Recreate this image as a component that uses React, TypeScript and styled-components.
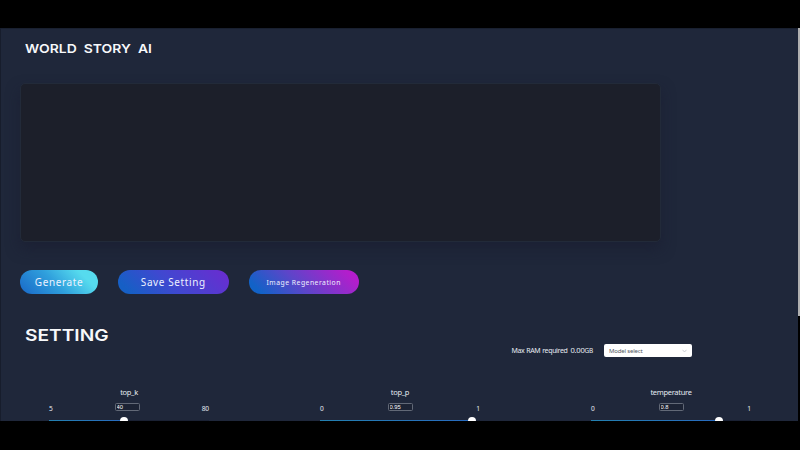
import React from 'react';
import styled, { createGlobalStyle } from 'styled-components';

const GlobalStyle = createGlobalStyle`
  * { box-sizing: border-box; }
  body { margin: 0; background: #000; overflow: hidden; }
  button, input, textarea { font-family: inherit; margin: 0; }
`;

const Screen = styled.div`
  display: flex;
  width: 800px;
  height: 450px;
  padding: 28px 0 29px;
  background: #000;
  font-family: 'Noto Sans', 'Open Sans', sans-serif;
  color: #e6ebf2;
`;

const Page = styled.main`
  width: 798px;
  height: 393px;
  flex: none;
  overflow: hidden;
  background: #1f273a;
  border-left: 1px solid #171d2c;
  border-top: 1px solid #192030;
`;

const ScrollThumb = styled.div`
  width: 2px;
  height: 288px;
  background: #b0b0b0;
`;

const Heading = styled.h1<{ $size: number; $stretch: number; $gap: number; $word?: number }>`
  margin: 0;
  width: max-content;
  font-family: Inter, sans-serif;
  font-weight: 600;
  font-size: ${p => p.$size}px;
  line-height: 20px;
  letter-spacing: ${p => p.$gap}px;
  word-spacing: ${p => p.$word ?? 0}px;
  color: #f7f8fa;
  transform: scaleX(${p => p.$stretch});
  transform-origin: left center;
`;

const Header = styled.header`
  height: 54px;
  padding: 10px 0 0 24px;
`;

const StoryBox = styled.textarea`
  display: block;
  width: 641px;
  height: 159px;
  margin-left: 19px;
  border: 1px solid #222a39;
  border-radius: 5px;
  outline: none;
  resize: none;
  background: #1c1f2a;
  color: #e6ebf2;
  box-shadow: 0 7px 14px rgba(25, 29, 48, 0.6);
`;

const Actions = styled.div`
  display: flex;
  gap: 20px;
  margin: 28px 0 0 19px;
`;

const Pill = styled.button<{ $width: number; $fill: string; $size: number; $gap: number }>`
  width: ${p => p.$width}px;
  height: 24px;
  padding: 1px 0 0;
  border: 0;
  border-radius: 12px;
  background: ${p => p.$fill};
  color: #edf2ff;
  font-size: ${p => p.$size}px;
  line-height: 23px;
  letter-spacing: ${p => p.$gap}px;
  white-space: nowrap;
`;

const SettingHeader = styled.div`
  height: 50px;
  padding: 31px 0 0 23.5px;
`;

const ModelRow = styled.div`
  display: flex;
  align-items: center;
  height: 13px;
  padding-left: 510.5px;
`;

const RamText = styled.span`
  display: flex;
  align-items: baseline;
  width: 92.5px;
  white-space: nowrap;
  font-size: 7px;
  line-height: 13px;
  letter-spacing: -0.36px;
  word-spacing: 0.4px;
`;

const RamValue = styled.span`
  margin-left: 3px;
  font-size: 7.6px;
  letter-spacing: -0.25px;
`;

const Unit = styled.small`
  font-size: 6.4px;
`;

const Select = styled.div`
  display: flex;
  align-items: center;
  justify-content: space-between;
  width: 88px;
  height: 13px;
  padding: 0 5px;
  border-radius: 2px;
  background: #fff;
  color: #50555e;
  font-size: 6px;
  letter-spacing: -0.16px;
`;

const Sliders = styled.div`
  display: flex;
  gap: 111px;
  margin: 29px 0 0 48px;
`;

const SliderGroup = styled.section`
  width: 160px;
  flex: none;
`;

const Label = styled.div`
  height: 12px;
  text-align: center;
  font-size: 7.5px;
  letter-spacing: -0.3px;
  line-height: 12px;
`;

const Range = styled.div`
  display: grid;
  grid-template-columns: 1fr 25px 1fr;
  align-items: center;
  height: 10px;
  margin-top: 5px;
  font-size: 6.6px;
  letter-spacing: -0.1px;
  line-height: 12px;
`;

const Max = styled.span`
  text-align: right;
`;

const NumberInput = styled.input<{ $shift: number }>`
  align-self: start;
  width: 25px;
  height: 8px;
  padding: 0 1px;
  margin-left: ${p => p.$shift}px;
  border: 1px solid #626977;
  border-radius: 1.5px;
  outline: none;
  background: #1c2334;
  color: #f8f9fc;
  font-family: 'Liberation Sans', sans-serif;
  font-size: 5.8px;
  line-height: 6px;
`;

const Track = styled.div`
  display: flex;
  align-items: center;
  height: 8px;
  margin-top: 4px;
  background: linear-gradient(#1a2133, #1a2133) center / 100% 2px no-repeat;
`;

const Filled = styled.div`
  height: 2px;
  background: linear-gradient(90deg, #2380b0, #286bc0);
`;

const Thumb = styled.div`
  width: 8px;
  height: 8px;
  margin-left: -4px;
  border-radius: 50%;
  background: #fff;
`;

const sliders = [
  { name: 'top_k', min: '5', max: '80', value: '40', fill: 75, shift: -2 },
  { name: 'top_p', min: '0', max: '1', value: '0.95', fill: 152, shift: 0 },
  { name: 'temperature', min: '0', max: '1', value: '0.8', fill: 128, shift: 0 },
];

export default function App() {
  return (
    <>
      <GlobalStyle />
      <Screen>
        <Page>
          <Header>
            <Heading $size={12.4} $stretch={1.12} $gap={0.05} $word={3}>WORLD STORY AI</Heading>
          </Header>
          <StoryBox aria-label="Story" />
          <Actions>
            <Pill $width={78} $size={10} $gap={0.6} $fill="linear-gradient(45deg, #1868c8, #2f9fdc 45%, #56dbee 80%)">Generate</Pill>
            <Pill $width={110.5} $size={10} $gap={0.6} $fill="linear-gradient(45deg, #165fc5 10%, #3e49d0 45%, #6c2bd0)">Save Setting</Pill>
            <Pill $width={110.5} $size={6.8} $gap={0.5} $fill="linear-gradient(45deg, #1262c7 10%, #5d45c9 45%, #b41dcc 90%)">Image Regeneration</Pill>
          </Actions>
          <SettingHeader>
            <Heading as="h2" $size={16.6} $stretch={1.155} $gap={0}>SETTING</Heading>
          </SettingHeader>
          <ModelRow>
            <RamText>
              Max RAM required <RamValue>0.00<Unit>GB</Unit></RamValue>
            </RamText>
            <Select role="combobox" aria-label="Model select">
              Model select
              <svg width="5" height="4" viewBox="0 0 5 4" fill="none" stroke="#b8bcc4" strokeWidth="0.7">
                <path d="M0.5 0.8 L2.5 3 L4.5 0.8" />
              </svg>
            </Select>
          </ModelRow>
          <Sliders>
            {sliders.map(s => (
              <SliderGroup key={s.name}>
                <Label>{s.name}</Label>
                <Range>
                  <span>{s.min}</span>
                  <NumberInput $shift={s.shift} defaultValue={s.value} aria-label={s.name} />
                  <Max>{s.max}</Max>
                </Range>
                <Track>
                  <Filled style={{ width: s.fill }} />
                  <Thumb />
                </Track>
              </SliderGroup>
            ))}
          </Sliders>
        </Page>
        <ScrollThumb />
      </Screen>
    </>
  );
}
